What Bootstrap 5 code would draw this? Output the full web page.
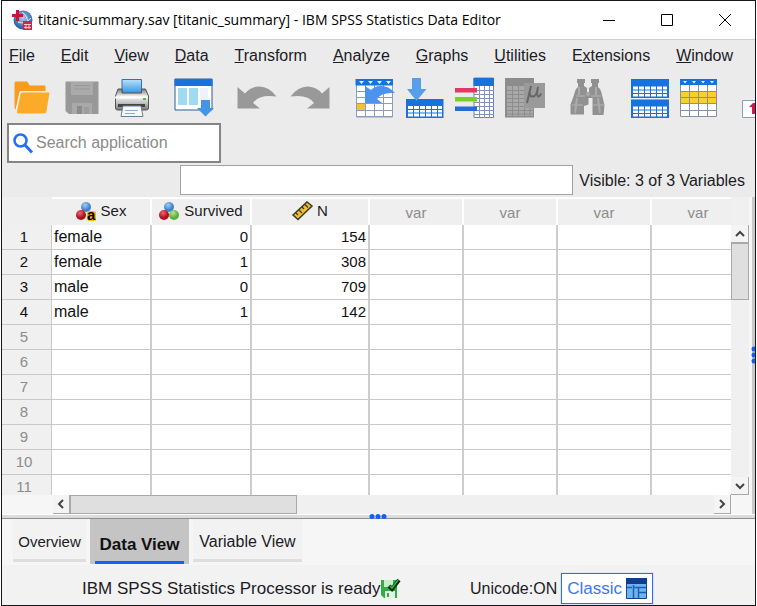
<!DOCTYPE html>
<html lang="en">
<head>
<meta charset="utf-8">
<meta name="viewport" content="width=device-width, initial-scale=1">
<title>titanic-summary.sav - IBM SPSS Statistics Data Editor</title>
<link href="https://cdn.jsdelivr.net/npm/bootstrap@5.3.0/dist/css/bootstrap.min.css" rel="stylesheet">
<style>
body{font-family:"Liberation Sans",Arial,sans-serif;font-size:16px;line-height:20px;color:#1c1c26;background:#fff}
button{font:inherit;color:inherit}
svg{display:block;overflow:visible;flex-shrink:0}
.app{border:1px solid #15151a;margin:0 1px;background:#ebebeb}
.titlebar{height:39px;background:#fff;border-bottom:1px solid #cfcfcf;padding:0 1px 0 10px;color:#000}
.caption{font-family:"Open Sans","Noto Sans",sans-serif;font-size:14px;font-weight:400;margin:0 0 0 5px}
.winbtn{width:58px;height:38px}
.menus{padding:6px 7px 0;gap:26px}
.menus a{color:#1c1c26;text-decoration:none}
.tools{height:54px;padding:10px 0 0 10px;gap:24px}
.tools .set{gap:10px}
.tools button{width:40px;height:44px}
.finder{width:214px;height:40px;margin:3px 0 0 5px;border:2px solid #858585;background:#fff;padding:0 4px;gap:2px}
.finder input{font-size:16px;outline:0;color:#444}
.finder input::placeholder{color:#8b8b8b;opacity:1}
.editor{padding:2px 10px 0 178px;gap:6px;height:34px}
.editor input{height:30px;border:1px solid #a3a3a3;background:#fff;outline:0}
.editor span{padding-top:6px}
.pane{background:#f6f6f6;border-right:3px solid #c9c9c9;padding-right:3px;min-height:0}
.sheet{table-layout:fixed;width:744px;border-collapse:separate;border-spacing:0;background:#fff;font-size:15px;line-height:20px;color:#111}
.sheet th,.sheet td{padding:0;height:25px;font-weight:400;vertical-align:middle;white-space:nowrap}
.sheet thead th{height:28px;background:#efefef;border-top:2px solid #fff;border-right:2px solid #fff;text-align:center;color:#1c1c26;padding-bottom:3px}
.sheet thead th:first-child{border-color:#efefef}
.sheet thead th.unused{color:#8c8c8c;padding:2px 0 0}
.sheet tbody th{background:#f0f0f0;text-align:center;padding-right:5px;color:#111;border-bottom:1px solid #c9c9c9;border-right:1px solid #c9c9c9}
.sheet tbody tr.blank th{color:#8c8c8c}
.sheet td{border-bottom:1px solid #c9c9c9;border-right:2px solid #cdcdcd;text-align:right;padding-right:2px}
.sheet td.txt{text-align:left;padding-left:2px;font-size:16px}
.cn{width:50px}.cv{width:100px}.cw{width:118px}.cx{width:94px}
.vbar{width:18px;background:#f0f0f0;padding-top:28px}
.hbar{height:19px;background:#f0f0f0;margin:0 18px 0 51px}
.sbtn{background:#f4f4f4;border:0;border-right:1px solid #a9a9a9;border-bottom:1px solid #a9a9a9}
.vbar .sbtn{width:18px;height:18px}
.hbar .sbtn{width:17px;height:19px}
.thumb{background:#dfdfdf;border:1px solid #a9a9a9}
.vbar .thumb{height:57px}
.hbar .thumb{width:227px}
.split-h{height:5px;background:#dcdcdc;border-top:1px solid #fff;border-bottom:1px solid #8f8f8f}
.dots-h{left:367px;top:0}
.dots-v{right:-6px;top:148px}
.views{background:#f6f6f6;height:46px;padding-left:11px;gap:4px}
.views button{height:43px;padding:6px 0 0;background:#f2f2f2;border:0;border-bottom:3px solid #dedede}
.v-over{width:73px;font-size:15px}
.v-vari{width:109px;font-size:16px}
.views .picked{height:45px;width:99px;background:#c4c4c4;border:0;padding:0 5px;font-size:17px;font-weight:700;color:#111}
.picked span{display:block;height:45px;padding-top:16px;border-bottom:3px solid #0f62fe}
.status{background:#f2f2f2;height:40px;padding:8px 102px 1px 80px}
.ready{font-size:17px}
.classic{height:31px;padding:0 5px;gap:4px;font-size:17px;background:#fff;border:1px solid #2f6df0;color:#3b76ee;box-shadow:0 0 0 1px #dce6fa}
</style>
<script src="https://cdn.jsdelivr.net/npm/bootstrap@5.3.0/dist/js/bootstrap.bundle.min.js"></script>
</head>
<body>
<div class="app vh-100 d-flex flex-column overflow-hidden">
  <header class="titlebar d-flex align-items-center flex-shrink-0">
    <svg width="21" height="21" viewBox="0 0 21 21" aria-hidden="true"><defs><radialGradient id="globe" cx=".5" cy=".4"><stop offset="0" stop-color="#a9cdee"/><stop offset="1" stop-color="#2c69a8"/></radialGradient></defs><circle cx="11" cy="10" r="9.500" fill="url(#globe)"/><path d="M6 12q7 3 13-4M10 2q6 4 6 12" stroke="#d9eaf8" fill="none"/><path d="M4 0h3v4h4v3H7v4H4V7H0V4h4z" fill="#c8143c"/><path d="M11 11h9v9h-9z" fill="#c8284b"/><path d="M12 14.500h7M12 17.500h7M14 14v5M17 14v5" stroke="#f6c5cf"/></svg>
    <h1 class="caption text-nowrap">titanic-summary.sav [titanic_summary] - IBM SPSS Statistics Data Editor</h1>
    <div class="d-flex ms-auto">
      <button class="winbtn btn border-0 p-0" aria-label="Minimize"><svg class="m-auto" width="12" height="12" viewBox="0 0 12 12"><path d="M0 6.500h12" stroke="#000"/></svg></button>
      <button class="winbtn btn border-0 p-0" aria-label="Maximize"><svg class="m-auto" width="12" height="12" viewBox="0 0 12 12"><path d="M.5.5h11v11H.5z" stroke="#000" fill="none"/></svg></button>
      <button class="winbtn btn border-0 p-0" aria-label="Close"><svg class="m-auto" width="12" height="12" viewBox="0 0 12 12"><path d="M0 0l12 12M12 0L0 12" stroke="#000"/></svg></button>
    </div>
  </header>

  <nav class="menus d-flex flex-shrink-0" aria-label="Main menu">
    <a href="#"><u>F</u>ile</a><a href="#"><u>E</u>dit</a><a href="#"><u>V</u>iew</a><a href="#"><u>D</u>ata</a><a href="#"><u>T</u>ransform</a><a href="#"><u>A</u>nalyze</a><a href="#"><u>G</u>raphs</a><a href="#"><u>U</u>tilities</a><a href="#">E<u>x</u>tensions</a><a href="#"><u>W</u>indow</a>
  </nav>

  <div class="tools d-flex flex-shrink-0 overflow-hidden" role="toolbar" aria-label="Tools">
    <div class="set d-flex">
      <button class="btn p-0 border-0" aria-label="Open"><svg width="40" height="44" viewBox="12 76 40 44"><path d="M14.500 83q0-1.500 1.500-1.500h11l3 4h14.500q1 0 1 1V91H22q-2 0-2.500 2L16 110q-1.500-1-1.500-3z" fill="#f79d1e"/><path d="M21.500 91.500h-1.500L16 110" stroke="#fff1dc" fill="none"/><path d="M22.500 92.500h27L46.500 111q-.3 2.500-2.500 2.500H18.500q-1.800 0-1.500-2l3.500-17q.5-2 2-2z" fill="#fbab28"/></svg></button>
      <button class="btn p-0 border-0" aria-label="Save"><svg width="40" height="44" viewBox="62 76 40 44"><path d="M65.500 81.500h33V114H69l-3.500-3z" fill="#989898"/><path d="M71 82h22v13H71z" fill="#aaa"/><path d="M74 85.500h16M74 89h16" stroke="#989898"/><path d="M72 103h20v11H72z" fill="#a9a9a9"/><path d="M77 106h5v8h-5z" fill="#8b8b8b"/><path d="M84 107h5v7h-5z" fill="#9c9c9c"/></svg></button>
      <button class="btn p-0 border-0" aria-label="Print"><svg width="40" height="44" viewBox="112 76 40 44"><defs><linearGradient id="sheetfill" x2="0" y2="1"><stop offset="0" stop-color="#b8e2fb"/><stop offset="1" stop-color="#2e8fe0"/></linearGradient><linearGradient id="body" x2="0" y2="1"><stop offset="0" stop-color="#777"/><stop offset=".35" stop-color="#f4f4f4"/><stop offset=".65" stop-color="#c4c4c4"/><stop offset="1" stop-color="#777"/></linearGradient></defs><path d="M122 79.500h19.500V94H122z" fill="url(#sheetfill)" stroke="#2a75b8"/><path d="M118 89h4v4h19.500v-4h4l3 7v12q0 2-2 2h-29q-2 0-2-2V96z" fill="url(#body)" stroke="#555"/><path d="M115 97.500h33" stroke="#fff" stroke-width="2"/><path d="M118 105.500h27" stroke="#444" stroke-width="3"/><path d="M123 106h18l2 10.500h-22z" fill="#f3f9ff" stroke="#67839b"/><path d="M125 110.500h13M125 113.500h10" stroke="#88add0"/><path d="M143 99h3" stroke="#41c541" stroke-width="2"/></svg></button>
    </div>
    <button class="btn p-0 border-0" aria-label="Recall dialog"><svg width="40" height="44" viewBox="176 76 40 44"><path d="M175 79h37v31h-37z" fill="#fff" stroke="#315d8c"/><path d="M174.500 79h38v7h-38z" fill="#1673de"/><path d="M178 88h9v17h-9zM189 88h9v17h-9z" fill="#a0dbf2"/><path d="M200 88h8v12h-8z" fill="#edf3fa"/><path d="M201 100h9v8h4l-8.500 8.500L197 108h4z" fill="#4494e8"/></svg></button>
    <div class="set d-flex">
      <button class="btn p-0 border-0" aria-label="Undo"><svg width="40" height="44" viewBox="240 76 40 44"><path d="M237.500 87v21.500H260l-7-5.500q6-9 23.500-6.500-8-10.500-18-10-8 .5-13.500 7z" fill="#999"/></svg></button>
      <button class="btn p-0 border-0" aria-label="Redo"><svg width="40" height="44" viewBox="290 76 40 44"><path d="M329.500 87v21.500H307l7-5.500q-6-9-23.500-6.500 8-10.500 18-10 8 .5 13.500 7z" fill="#999"/></svg></button>
    </div>
    <div class="set d-flex">
      <button class="btn p-0 border-0" aria-label="Go to case"><svg width="40" height="44" viewBox="354 76 40 44"><path d="M356 79h37v38h-37z" fill="#fff"/><path d="M356.500 85v32h36V85M356.500 91.500h36M356.500 97.500h36M356.500 103.500h36M356.500 110.500h36M356.500 116.500h36M365.500 85v32M374.500 85v32M383.500 85v32" stroke="#8d9cb8" fill="none"/><path d="M355.500 79H393v6.500h-37.500z" fill="#1673de"/><path d="M359 81h5l-2.500 3zM368 81h5l-2.500 3zM377 81h5l-2.500 3zM386 81h5l-2.500 3z" fill="#e8f2ff"/><path d="M357 104h8v6h-8z" fill="#eec52e"/><path d="M365 86v17h17l-5-4q4-7 18-6-7-8-15-7-5 0-9 4z" fill="#4b93ee"/></svg></button>
      <button class="btn p-0 border-0" aria-label="Go to variable"><svg width="40" height="44" viewBox="404 76 40 44"><path d="M406 99h37.500v19H406z" fill="#1673de"/><path d="M408 106h34v10.500h-34z" fill="#fff"/><path d="M408 109.500h34M408 113h34M413.500 106v11M419.500 106v11M425.500 106v11M431.500 106v11M437.500 106v11" stroke="#1673de"/><path d="M412 78h9v11h5.500L416.500 101 407 89h5z" fill="#579fec"/></svg></button>
      <button class="btn p-0 border-0" aria-label="Variables"><svg width="40" height="44" viewBox="454 76 40 44"><path d="M474 78h19.500v39.500H474z" fill="#fff" stroke="#7081a8"/><path d="M474 90.500h20M474 94.500h20M474 98.500h20M474 102.500h20M474 106.500h20M474 110.500h20M474 114.500h20M479.500 86v32M484.500 86v32M489.500 86v32" stroke="#8292b5"/><path d="M473.500 78H494v8h-20.500z" fill="#1673de"/><path d="M455 88h22v4.500h-22z" fill="#e43864"/><path d="M455 97h22v4.500h-22z" fill="#7ad02b"/><path d="M455 106.500h22v4.500h-22z" fill="#256cd8"/></svg></button>
      <button class="btn p-0 border-0" aria-label="Descriptive statistics"><svg width="40" height="44" viewBox="504 76 40 44"><path d="M505 78h29v39.500h-29z" fill="#8c8c8c"/><path d="M507 86h26v30h-26z" fill="#a9a9a9"/><path d="M507 90.500h26M507 94.500h26M507 98.500h26M507 102.500h26M507 106.500h26M507 110.500h26M507 114h26M512.500 86v30M518.500 86v30M524.500 86v30M530 86v30" stroke="#8c8c8c"/><path d="M524 83h21v25h-21z" fill="#9a9a9a"/><path d="M531 86l-4 17M530 92q-1 5 3 4.500 4-.5 5-9.500-2 9 0 9.500 2 0 3-3" stroke="#666" stroke-width="2" fill="none"/></svg></button>
    </div>
    <button class="btn p-0 border-0" aria-label="Find"><svg width="40" height="44" viewBox="568 76 40 44"><path d="M578 79h7v4h-1v3l3 2v4h2v-4l3-2v-3h-1v-4h8v4h-1v4q3 2 4 8l2.500 10-1 10h-11V98h-4v6.500L584 106v8.500h-13.500v-10L574 95q1-6 4-8v-4h-1v-4z" fill="#919191"/><path d="M576 96h9M591 96h10M572 105h11M593 105h11" stroke="#b5b5b5"/><path d="M579 87v8M596 87v8M577 98l-2 15M598 98l2 15" stroke="#aaa" stroke-width="2"/><circle cx="588" cy="94" r="2" fill="#aaa"/></svg></button>
    <div class="set d-flex">
      <button class="btn p-0 border-0" aria-label="Split file"><svg width="40" height="44" viewBox="632 76 40 44"><path d="M631 79h38v19h-38zM631 99.500h38V118h-38z" fill="#1673de"/><path d="M633 86.500h34v10h-34zM633 106.500h34v10h-34z" fill="#fff"/><path d="M633 90h34M633 93.500h34M633 110h34M633 113.500h34M638.500 86v11M644.500 86v11M650.500 86v11M656.500 86v11M662.500 86v11M638.500 106v11M644.500 106v11M650.500 106v11M656.500 106v11M662.500 106v11" stroke="#1673de"/></svg></button>
      <button class="btn p-0 border-0" aria-label="Select cases"><svg width="40" height="44" viewBox="682 76 40 44"><path d="M680 79h37v38h-37z" fill="#fff"/><path d="M680 91h37v12h-37z" fill="#f7d02a"/><path d="M680.500 85v31.500h36V85M680.500 91.500h36M680.500 97.500h36M680.500 103.500h36M680.500 110.500h36M689.500 85v32M698.500 85v32M707.500 85v32" stroke="#8490a8" fill="none"/><path d="M680 79h37v6H680z" fill="#1673de"/><path d="M683 81h4l-2 2.500zM692 81h4l-2 2.500zM701 81h4l-2 2.500zM710 81h4l-2 2.500z" fill="#e8f2ff"/></svg></button>
    </div>
    <button class="btn p-0 border-0" aria-label="Value labels"><svg width="40" height="44" viewBox="746 76 40 44"><path d="M742.500 100.500h24v17h-24z" fill="#fff" stroke="#8ca0be"/><path d="M749 107l4-4h3v11h-4v-7z" fill="#d6164f"/></svg></button>
  </div>

  <label class="finder d-flex align-items-center flex-shrink-0">
    <svg width="21" height="21" viewBox="0 0 21 21" aria-hidden="true"><circle cx="7.500" cy="7.500" r="6" fill="none" stroke="#2470f5" stroke-width="2.500"/><path d="M12 12l7 7.500" stroke="#2470f5" stroke-width="3"/></svg>
    <input class="border-0 p-0 w-100" type="search" placeholder="Search application" aria-label="Search application">
  </label>

  <div class="editor d-flex align-items-start flex-shrink-0">
    <input class="flex-fill" type="text" aria-label="Cell value">
    <span class="text-nowrap">Visible: 3 of 3 Variables</span>
  </div>

  <main class="pane position-relative d-flex flex-column flex-fill">
    <div class="d-flex flex-fill overflow-hidden">
      <div class="flex-fill overflow-hidden">
        <table class="sheet">
          <colgroup><col class="cn"><col class="cv"><col class="cv"><col class="cw"><col class="cx"><col class="cx"><col class="cx"><col class="cx"></colgroup>
          <thead><tr>
            <th></th>
            <th scope="col"><div class="d-flex align-items-center justify-content-center gap-1"><svg width="21" height="20" viewBox="0 0 21 20"><defs><radialGradient id="bb" cx=".4" cy=".3"><stop offset="0" stop-color="#a4cdf2"/><stop offset="1" stop-color="#3e84c8"/></radialGradient><radialGradient id="rb" cx=".4" cy=".3"><stop offset="0" stop-color="#ec6a6f"/><stop offset="1" stop-color="#b40c1c"/></radialGradient><radialGradient id="gb" cx=".4" cy=".3"><stop offset="0" stop-color="#b5e49a"/><stop offset="1" stop-color="#5cae3a"/></radialGradient></defs><circle cx="10" cy="6" r="5" fill="url(#bb)"/><circle cx="5" cy="14" r="5" fill="url(#rb)"/><rect x="11" y="10" width="9" height="10" rx="2" fill="#f6b91c"/><text x="11" y="19" font-size="15" font-weight="700" fill="#000">a</text></svg>Sex</div></th>
            <th scope="col"><div class="d-flex align-items-center justify-content-center gap-1"><svg width="21" height="20" viewBox="0 0 21 20"><circle cx="10" cy="6" r="5" fill="url(#bb)"/><circle cx="5" cy="14" r="5" fill="url(#rb)"/><circle cx="15" cy="14" r="5" fill="url(#gb)"/></svg>Survived</div></th>
            <th scope="col"><div class="d-flex align-items-center justify-content-center gap-1"><svg width="21" height="20" viewBox="0 0 21 20"><path d="M1 14L15 1l5 4L6 18.500z" fill="#f3bf2b" stroke="#3b3a30" stroke-width="1.500"/><path d="M4 12l2 2M7 9l3 3M10 6l2 2M13 3.500l3 3" stroke="#3b3a30" stroke-width="1.300"/></svg>N</div></th>
            <th class="unused" scope="col">var</th><th class="unused" scope="col">var</th><th class="unused" scope="col">var</th><th class="unused" scope="col">var</th>
          </tr></thead>
          <tbody>
            <tr><th scope="row">1</th><td class="txt">female</td><td>0</td><td>154</td><td></td><td></td><td></td><td></td></tr>
            <tr><th scope="row">2</th><td class="txt">female</td><td>1</td><td>308</td><td></td><td></td><td></td><td></td></tr>
            <tr><th scope="row">3</th><td class="txt">male</td><td>0</td><td>709</td><td></td><td></td><td></td><td></td></tr>
            <tr><th scope="row">4</th><td class="txt">male</td><td>1</td><td>142</td><td></td><td></td><td></td><td></td></tr>
            <tr class="blank"><th scope="row">5</th><td></td><td></td><td></td><td></td><td></td><td></td><td></td></tr>
            <tr class="blank"><th scope="row">6</th><td></td><td></td><td></td><td></td><td></td><td></td><td></td></tr>
            <tr class="blank"><th scope="row">7</th><td></td><td></td><td></td><td></td><td></td><td></td><td></td></tr>
            <tr class="blank"><th scope="row">8</th><td></td><td></td><td></td><td></td><td></td><td></td><td></td></tr>
            <tr class="blank"><th scope="row">9</th><td></td><td></td><td></td><td></td><td></td><td></td><td></td></tr>
            <tr class="blank"><th scope="row">10</th><td></td><td></td><td></td><td></td><td></td><td></td><td></td></tr>
            <tr class="blank"><th scope="row">11</th><td></td><td></td><td></td><td></td><td></td><td></td><td></td></tr>
          </tbody>
        </table>
      </div>
      <div class="vbar d-flex flex-column flex-shrink-0">
        <button class="sbtn p-0" aria-label="Scroll up"><svg class="m-auto" width="10" height="6" viewBox="0 0 10 6"><path d="M1 5l4-4 4 4" fill="none" stroke="#444" stroke-width="2"/></svg></button>
        <div class="thumb"></div>
        <button class="sbtn p-0 mt-auto" aria-label="Scroll down"><svg class="m-auto" width="10" height="6" viewBox="0 0 10 6"><path d="M1 1l4 4 4-4" fill="none" stroke="#444" stroke-width="2"/></svg></button>
      </div>
    </div>
    <div class="hbar d-flex flex-shrink-0">
      <button class="sbtn p-0" aria-label="Scroll left"><svg class="m-auto" width="6" height="10" viewBox="0 0 6 10"><path d="M5 1L1 5l4 4" fill="none" stroke="#444" stroke-width="2"/></svg></button>
      <div class="thumb"></div>
      <button class="sbtn p-0 ms-auto" aria-label="Scroll right"><svg class="m-auto" width="6" height="10" viewBox="0 0 6 10"><path d="M1 1l4 4-4 4" fill="none" stroke="#444" stroke-width="2"/></svg></button>
    </div>
    <svg class="dots-v position-absolute" width="6" height="20" viewBox="0 0 6 20" aria-hidden="true"><g fill="#0f5cff"><circle cx="2" cy="4" r="2.500"/><circle cx="2" cy="10" r="2.500"/><circle cx="2" cy="16" r="2.500"/></g></svg>
  </main>
  <div class="split-h position-relative flex-shrink-0"><svg class="dots-h position-absolute" width="18" height="4" viewBox="0 0 18 4" aria-hidden="true"><g fill="#0f5cff"><circle cx="3" cy="1.500" r="2.500"/><circle cx="9" cy="1.500" r="2.500"/><circle cx="15" cy="1.500" r="2.500"/></g></svg></div>

  <div class="views d-flex flex-shrink-0" role="tablist">
    <button class="v-over" role="tab" aria-selected="false">Overview</button>
    <button class="picked" role="tab" aria-selected="true"><span>Data View</span></button>
    <button class="v-vari" role="tab" aria-selected="false">Variable View</button>
  </div>

  <footer class="status d-flex align-items-center flex-shrink-0">
    <span class="ready text-nowrap">IBM SPSS Statistics Processor is ready</span>
    <svg width="20" height="20" viewBox="0 0 20 20" role="img" aria-label="Ready"><path d="M0 1h16v18H3l-3-3z" fill="#35ab45"/><path d="M3 1h9v7H3z" fill="#c9edc9"/><path d="M4 12h10v7H4z" fill="#e3f5e3"/><path d="M6 14h2v4H6z" fill="#35ab45"/><path d="M8 7l3 3 7-9" stroke="#072b0b" stroke-width="4" fill="none"/><path d="M9 7l2 2 6-8" stroke="#37b545" stroke-width="1.500" fill="none"/></svg>
    <span class="ms-auto me-1">Unicode:ON</span>
    <button class="classic d-flex align-items-center">Classic
      <svg width="21" height="21" viewBox="0 0 21 21" aria-hidden="true"><path d="M.5.5h20v20H.5z" fill="#6fb4f2" stroke="#12458f"/><path d="M0 0h21v6H0z" fill="#0f3f8a"/><path d="M1 9.500h5M7.500 7v13M7 9.500h13M12 14.500h8M12.500 10v10" stroke="#1d5fae" stroke-width="1.500"/></svg>
    </button>
  </footer>
</div>
</body>
</html>
